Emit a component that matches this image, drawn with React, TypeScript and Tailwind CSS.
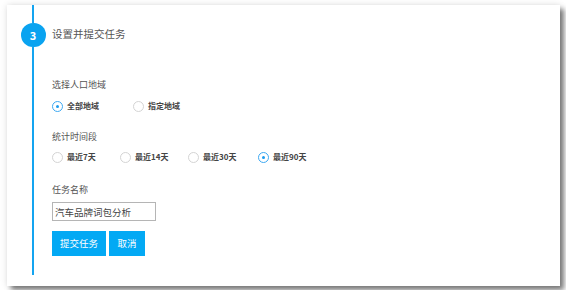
import { useState } from 'react';

const cjk = { fontFamily: '"Noto Sans CJK SC", "Noto Sans", sans-serif' };

interface RadioProps {
  label: string;
  checked: boolean;
  width: string;
  onClick: () => void;
}

function Radio({ label, checked, width, onClick }: RadioProps) {
  return (
    <button type="button" onClick={onClick} className={`flex items-center gap-[4px] h-[14px] ${width}`}>
      <span
        className={`w-[11px] h-[11px] rounded-full border flex items-center justify-center bg-white ${
          checked ? 'border-[#3ea9f2]' : 'border-[#d4d4d4]'
        }`}
      >
        {checked && <span className="w-[3px] h-[3px] rounded-full bg-[#1c9cf0]" />}
      </span>
      <span className="text-[8px] font-bold text-[#444] leading-none">{label}</span>
    </button>
  );
}

export default function App() {
  const [region, setRegion] = useState('全部地域');
  const [period, setPeriod] = useState('最近90天');

  const periods = [
    { label: '最近7天', width: 'w-[68px]' },
    { label: '最近14天', width: 'w-[68px]' },
    { label: '最近30天', width: 'w-[70px]' },
    { label: '最近90天', width: 'w-[70px]' },
  ];

  return (
    <div className="w-[566px] h-[290px] bg-white pt-[5px] pl-[7px] overflow-hidden" style={cjk}>
      <div className="w-[553px] h-[281px] bg-white flex pb-[11px] shadow-[4px_4px_5px_rgba(0,0,0,0.5),0_0_7px_rgba(0,0,0,0.12)]">
        {/* Step rail */}
        <div className="ml-[13px] w-[26px] flex flex-col items-center">
          <div className="w-[2px] h-[18px] bg-[#14a4f0]" />
          <div className="w-[25px] h-[24px] rounded-full bg-[#0aa3f0] flex items-center justify-center text-white text-[11px] font-bold">
            3
          </div>
          <div className="w-[2px] flex-1 bg-[#14a4f0]" />
        </div>

        {/* Content */}
        <div className="ml-[6px] pt-[18px] flex flex-col items-start">
          <div className="h-[22px] flex items-center text-[10.5px] text-[#555]">设置并提交任务</div>

          <div className="mt-[33px] h-[14px] leading-[14px] text-[9px] text-[#555]">选择人口地域</div>
          <div className="mt-[7px] flex">
            {['全部地域', '指定地域'].map((r) => (
              <Radio key={r} label={r} width="w-[81px]" checked={region === r} onClick={() => setRegion(r)} />
            ))}
          </div>

          <div className="mt-[17px] h-[14px] leading-[14px] text-[9px] text-[#555]">统计时间段</div>
          <div className="mt-[6px] flex">
            {periods.map((p) => (
              <Radio key={p.label} label={p.label} width={p.width} checked={period === p.label} onClick={() => setPeriod(p.label)} />
            ))}
          </div>

          <div className="mt-[19px] h-[14px] leading-[14px] text-[9px] text-[#555]">任务名称</div>
          <input
            defaultValue="汽车品牌词包分析"
            className="mt-[5px] w-[104px] h-[19px] border border-[#b5b5b5] px-[2px] text-[9.5px] text-[#444] outline-none"
            style={cjk}
          />

          <div className="mt-[10px] flex gap-[3px]">
            <button type="button" className="w-[54px] h-[25px] bg-[#03a9f4] text-white text-[9.5px]">
              提交任务
            </button>
            <button type="button" className="w-[36px] h-[25px] bg-[#03a9f4] text-white text-[9.5px]">
              取消
            </button>
          </div>
        </div>
      </div>
    </div>
  );
}
